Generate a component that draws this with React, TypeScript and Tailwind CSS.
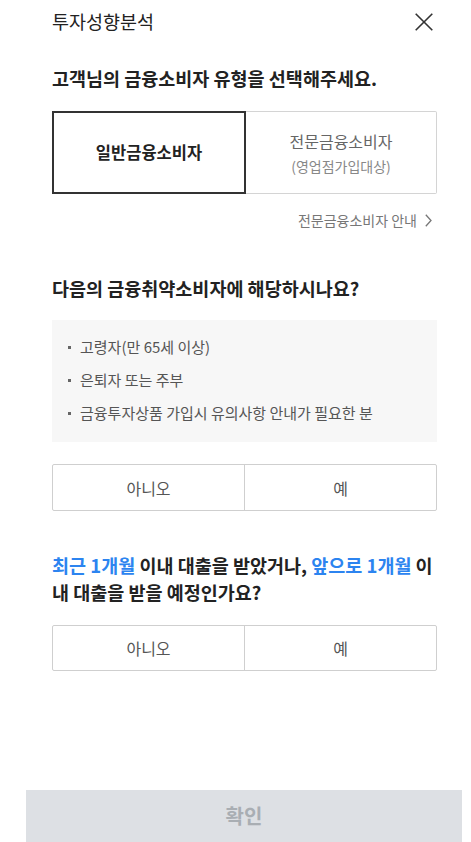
import React from 'react';

const font = { fontFamily: '"Noto Sans CJK KR", "Noto Sans", sans-serif' };

const YesNo: React.FC<{ className?: string }> = ({ className = '' }) => (
  <div className={`flex rounded-[2px] border border-[#cfcfcf] ${className}`}>
    <button className="flex-1 text-[16px] text-[#555] border-r border-[#cfcfcf]">아니오</button>
    <button className="flex-1 text-[16px] text-[#555]">예</button>
  </div>
);

const App: React.FC = () => {
  const bullets = ['고령자(만 65세 이상)', '은퇴자 또는 주부', '금융투자상품 가입시 유의사항 안내가 필요한 분'];

  return (
    <div className="min-h-screen bg-white flex flex-col" style={font}>
      <div className="pl-[52px] pr-[34px]">
        {/* 헤더 */}
        <div className="h-[44px] flex items-center justify-between pr-[4px]">
          <h1 className="text-[18.5px] text-[#222]">투자성향분석</h1>
          <button aria-label="닫기" className="w-[18px] h-[18px] flex items-center justify-center">
            <svg width="18" height="18" viewBox="0 0 18 18" fill="none" stroke="#333" strokeWidth="1.6">
              <path d="M0.7 0.7 L17.3 17.3 M17.3 0.7 L0.7 17.3" />
            </svg>
          </button>
        </div>

        {/* 소비자 유형 */}
        <p className="mt-[21px] text-[18.5px] leading-[26px] font-bold text-[#222]">
          고객님의 금융소비자 유형을 선택해주세요.
        </p>
        <div className="mt-[20px] flex h-[83px]">
          <button className="flex-1 border-2 border-[#333] text-[16.5px] font-bold text-[#222]">일반금융소비자</button>
          <button className="flex-1 border border-l-0 border-[#d4d4d4] rounded-r-[2px] flex flex-col items-center justify-center">
            <span className="text-[16px] text-[#666] leading-[24px]">전문금융소비자</span>
            <span className="text-[14px] text-[#888] leading-[22px] mt-[2px]">(영업점가입대상)</span>
          </button>
        </div>
        <div className="mt-[16px] flex justify-end items-center gap-[8px] pr-[5px] h-[20px]">
          <span className="text-[14px] text-[#777]">전문금융소비자 안내</span>
          <svg width="7" height="13" viewBox="0 0 7 13" fill="none" stroke="#777" strokeWidth="1.3">
            <path d="M0.8 0.8 L6 6.5 L0.8 12.2" />
          </svg>
        </div>

        {/* 금융취약소비자 */}
        <p className="mt-[45px] text-[18.5px] leading-[26px] font-bold text-[#222]">
          다음의 금융취약소비자에 해당하시나요?
        </p>
        <ul className="mt-[19px] h-[122px] bg-[#f7f7f7] pt-[16px] pl-[16px] flex flex-col gap-[11px]">
          {bullets.map((b) => (
            <li key={b} className="flex items-center h-[22px] text-[15px] text-[#555]">
              <span className="w-[3px] h-[3px] bg-[#666] mr-[9px]" />
              {b}
            </li>
          ))}
        </ul>
        <YesNo className="mt-[22px] h-[47px]" />

        {/* 대출 여부 */}
        <p className="mt-[41px] text-[18.5px] leading-[27px] font-bold text-[#222]">
          <span className="text-[#2c84f0]">최근 1개월</span>
          <span> 이내 대출을 받았거나, </span>
          <span className="text-[#2c84f0]">앞으로 1개월</span>
          <span> 이내 대출을 받을 예정인가요?</span>
        </p>
        <YesNo className="mt-[19px] h-[46px]" />
      </div>

      {/* 확인 버튼 */}
      <div className="mt-auto pl-[26px] pr-[9px]">
        <button className="w-full h-[52px] bg-[#dde0e4] text-[20px] font-bold text-[#a9aeb3]">확인</button>
      </div>
    </div>
  );
};

export default App;
